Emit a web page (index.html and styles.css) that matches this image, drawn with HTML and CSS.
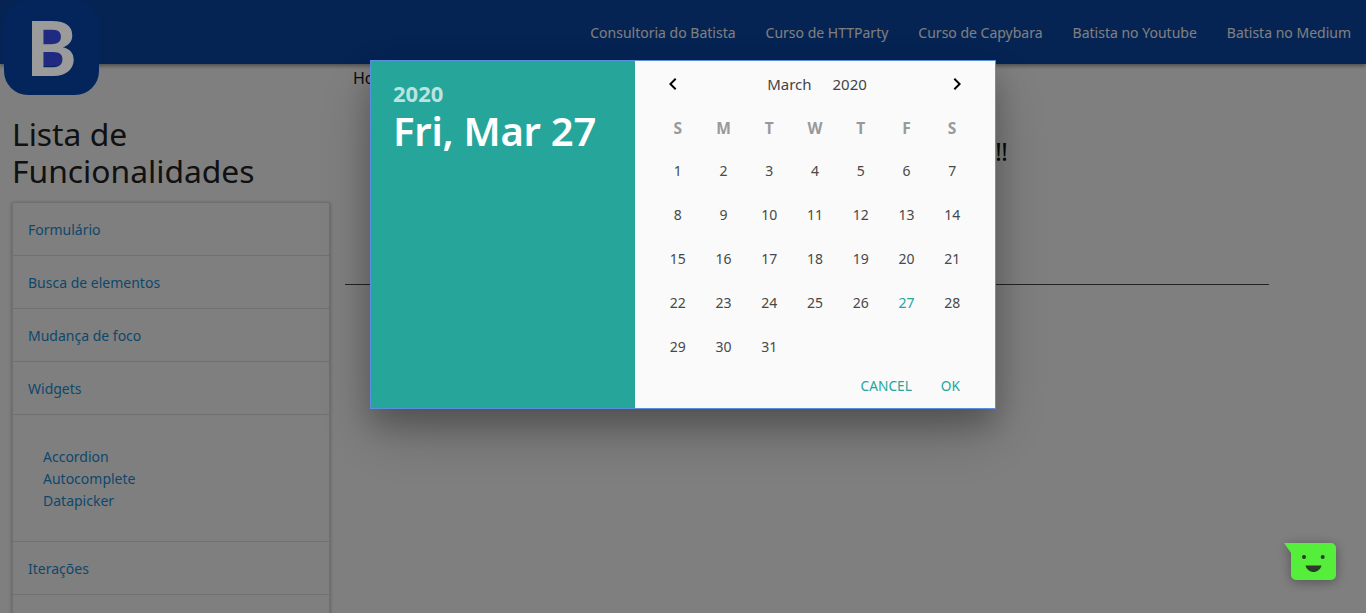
FILE: index.html
```html
<!DOCTYPE html>
<html>
<head>
<title>Datepicker</title>
<link rel="stylesheet" href="styles.css">
</head>
<body>

<header class="topbar">
	<a class="logo" href="#"><span class="logo-letter">B</span></a>
	<nav class="topnav">
		<a href="#">Consultoria do Batista</a>
		<a href="#">Curso de HTTParty</a>
		<a href="#">Curso de Capybara</a>
		<a href="#">Batista no Youtube</a>
		<a href="#">Batista no Medium</a>
	</nav>
</header>

<div class="page">
	<aside class="sidebar">
		<h4 class="side-title">Lista de Funcionalidades</h4>
		<ul class="side-list">
			<li><a href="#">Formulário</a></li>
			<li><a href="#">Busca de elementos</a></li>
			<li><a href="#">Mudança de foco</a></li>
			<li><a href="#">Widgets</a></li>
			<li class="side-sub">
				<a href="#">Accordion</a>
				<a href="#">Autocomplete</a>
				<a href="#">Datapicker</a>
			</li>
			<li><a href="#">Iterações</a></li>
			<li></li>
		</ul>
	</aside>
	<main class="content">
		<div class="crumb">Home</div>
		<h5 class="welcome">!!</h5>
		<hr class="rule">
	</main>
</div>

<div class="overlay">
	<div class="modal">
		<div class="date-side">
			<div class="date-year">2020</div>
			<div class="date-full">Fri, Mar 27</div>
		</div>
		<div class="cal-side">
			<div class="cal-head">
				<svg class="arrow" width="24" height="24" viewBox="0 0 24 24"><path d="M15.4 7.4 14 6l-6 6 6 6 1.4-1.4L10.8 12z"/></svg>
				<div class="cal-month"><span>March</span><span>2020</span></div>
				<svg class="arrow" width="24" height="24" viewBox="0 0 24 24"><path d="M10 6 8.6 7.4 13.2 12l-4.6 4.6L10 18l6-6z"/></svg>
			</div>
			<div class="cal-grid">
				<div class="wd">S</div><div class="wd">M</div><div class="wd">T</div><div class="wd">W</div><div class="wd">T</div><div class="wd">F</div><div class="wd">S</div>
				<div>1</div><div>2</div><div>3</div><div>4</div><div>5</div><div>6</div><div>7</div>
				<div>8</div><div>9</div><div>10</div><div>11</div><div>12</div><div>13</div><div>14</div>
				<div>15</div><div>16</div><div>17</div><div>18</div><div>19</div><div>20</div><div>21</div>
				<div>22</div><div>23</div><div>24</div><div>25</div><div>26</div><div class="today">27</div><div>28</div>
				<div>29</div><div>30</div><div>31</div>
			</div>
			<div class="cal-foot">
				<button>CANCEL</button>
				<button>OK</button>
			</div>
		</div>
	</div>
</div>

<svg class="chat" width="60" height="46" viewBox="0 0 60 46">
	<path d="M1 1H48a5 5 0 0 1 5 5V33a5 5 0 0 1-5 5H13a5 5 0 0 1-5-5V11z" fill="#55ee3b"/>
	<circle cx="21" cy="15" r="2" fill="#2b3a2b"/>
	<circle cx="39.700" cy="15" r="2" fill="#2b3a2b"/>
	<path d="M22.500 23.500H38.500C37.500 27.500 34 30 30.500 30S23.500 27.500 22.500 23.500z" fill="#2b3a2b"/>
</svg>

</body>
</html>
```
FILE: styles.css
```css
html, body {
	height: 100%;
	overflow: hidden;
}
body {
	margin: 0;
	background: #fff;
	color: #222;
	font-family: "Noto Sans", "Open Sans", sans-serif;
	font-size: 15px;
}
a {
	text-decoration: none;
	color: #1c8fd6;
}

.topbar {
	height: 64px;
	background: #0a47a6;
	box-shadow: 0 2px 4px rgba(0,0,0,.4);
	display: flex;
	justify-content: flex-end;
	align-items: center;
}
/* sits over the overlay, the colours are already the dimmed ones */
.logo {
	position: absolute;
	z-index: 2;
	top: 0;
	left: 4px;
	width: 95px;
	height: 95px;
	border-radius: 24px;
	background: #03255c;
	overflow: hidden;
	display: flex;
	align-items: center;
	justify-content: center;
}
.logo::before {
	content: "";
	position: absolute;
	left: 39px;
	top: 28px;
	width: 22px;
	height: 38px;
	background: #1f2a80;
}
.logo-letter {
	position: relative;
	top: -1px;
	color: #9b9b9b;
	font-family: Lato, sans-serif;
	font-weight: 900;
	font-size: 76px;
	line-height: 95px;
}
.topnav {
	display: flex;
}
.topnav a {
	padding: 0 15px;
	color: #fff;
	font-size: 14px;
}

.page {
	display: flex;
}
.sidebar {
	width: 318px;
	margin-left: 12px;
	padding-top: 51px;
	flex-shrink: 0;
}
.side-title {
	margin: 0 0 13px;
	font-size: 31.800px;
	font-weight: 400;
	line-height: 37px;
	color: #222;
}
.side-list {
	margin: 0;
	padding: 0;
	list-style: none;
	border: 1px solid #e0e0e0;
	box-shadow: 0 1px 4px rgba(0,0,0,.3);
}
.side-list li {
	height: 52px;
	border-bottom: 1px solid #e0e0e0;
	padding: 0 15px;
	display: flex;
	align-items: center;
	font-size: 14px;
}
.side-list .side-sub {
	height: 124px;
	padding: 2px 15px 0 30px;
	flex-direction: column;
	align-items: flex-start;
	justify-content: center;
}
.side-sub a {
	line-height: 22px;
}

.content {
	flex: 1;
	margin: 0 97px 0 15px;
}
.crumb {
	margin: 3px 0 0 8px;
	font-size: 16px;
	line-height: 22px;
	color: #111;
}
.welcome {
	margin: 46px 262px 0 0;
	font-size: 26px;
	font-weight: 400;
	line-height: 32px;
	letter-spacing: -1px;
	text-align: right;
	color: #111;
}
.rule {
	margin: 117px 0 0;
	border: 0;
	border-top: 1px solid #444;
}

.overlay {
	position: fixed;
	top: 0;
	left: 0;
	right: 0;
	bottom: 0;
	background: rgba(0,0,0,.5);
	display: flex;
	justify-content: center;
	align-items: flex-start;
	padding-top: 60px;
}
.modal {
	width: 624px;
	height: 347px;
	display: flex;
	border: 1px solid #5a8ee0;
	box-shadow: 0 16px 28px rgba(0,0,0,.22), 0 25px 55px rgba(0,0,0,.21);
}
.date-side {
	width: 222px;
	padding: 19px 20px 0 22px;
	background: #26a69a;
	color: #fff;
	flex-shrink: 0;
}
.date-year {
	font-size: 22px;
	font-weight: 700;
	line-height: 27px;
	color: rgba(255,255,255,.7);
}
.date-full {
	font-size: 40px;
	font-weight: 600;
	line-height: 48px;
	letter-spacing: -0.25px;
	white-space: nowrap;
}
.cal-side {
	flex: 1;
	background: #fafafa;
	padding: 0 20px;
	display: flex;
	flex-direction: column;
}
.cal-head {
	height: 46px;
	padding: 0 6px;
	display: flex;
	align-items: center;
	justify-content: space-between;
}
.cal-month {
	display: flex;
	gap: 21px;
	font-size: 15px;
	color: #444;
	margin-left: 4px;
}
.cal-grid {
	display: grid;
	grid-template-columns: repeat(7, 1fr);
	grid-template-rows: 41px repeat(5, 44px);
	align-items: center;
	justify-items: center;
	font-size: 14px;
	color: #484848;
}
.cal-grid .wd {
	font-size: 15.500px;
	font-weight: 700;
	color: #999;
}
.cal-grid .today {
	color: #26a69a;
}
.cal-foot {
	display: flex;
	justify-content: flex-end;
	gap: 29px;
	padding: 7px 15px 0 0;
}
.cal-foot button {
	border: 0;
	padding: 0;
	background: none;
	color: #26a69a;
	font-family: inherit;
	font-size: 13.700px;
	line-height: 22px;
}

.chat {
	position: fixed;
	left: 1283px;
	top: 542px;
	filter: drop-shadow(0 2px 6px rgba(0,0,0,.35));
}
```
